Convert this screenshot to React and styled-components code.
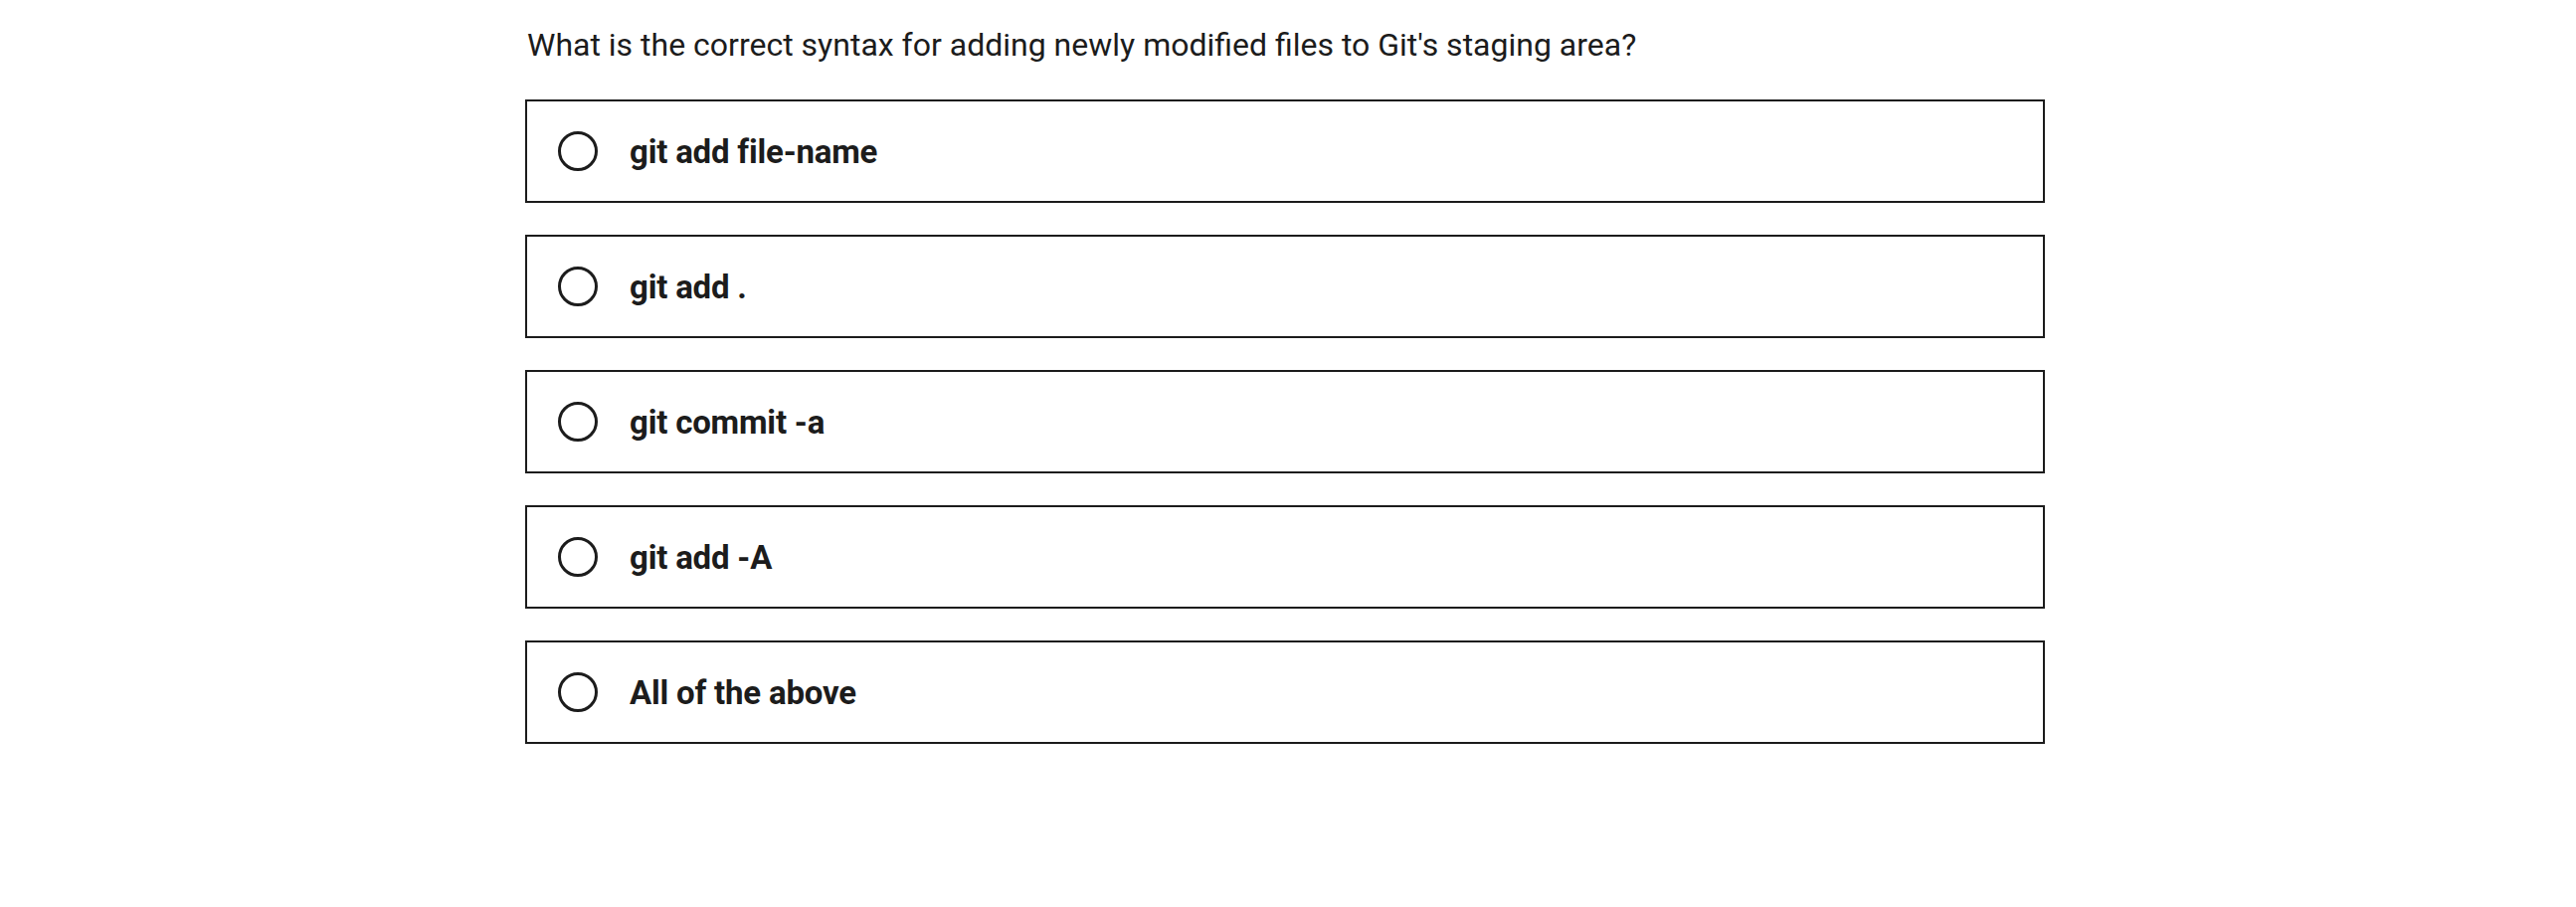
import React from 'react'
import styled, { createGlobalStyle } from 'styled-components'

const GlobalStyle = createGlobalStyle`
  body {
    margin: 0;
    background: #fff;
    font-family: Roboto, "Liberation Sans", sans-serif;
    color: #1c1c1c;
  }
`

const options = ['git add file-name', 'git add .', 'git commit -a', 'git add -A', 'All of the above']

const App = () => {
  return (
    <>
      <GlobalStyle />
      <Quiz>
        <Question>What is the correct syntax for adding newly modified files to Git's staging area?</Question>
        <OptionList>
          {options.map((opt) => (
            <Option key={opt}>
              <Radio />
              <Label>{opt}</Label>
            </Option>
          ))}
        </OptionList>
      </Quiz>
    </>
  )
}

export default App

const Quiz = styled.div`
  width: 1528px;
  margin-left: 528px;
  padding-top: 25px;
`

const Question = styled.p`
  margin: 0 0 35px 2px;
  font-size: 32px;
  line-height: 40px;
  font-weight: 400;
`

const OptionList = styled.div`
  display: flex;
  flex-direction: column;
  gap: 32px;
`

const Option = styled.div`
  display: flex;
  align-items: center;
  height: 100px;
  border: 2px solid #1c1c1c;
  padding-left: 31px;
  cursor: pointer;
`

const Radio = styled.span`
  width: 40px;
  height: 40px;
  box-sizing: border-box;
  border: 3.5px solid #1c1c1c;
  border-radius: 50%;
  flex-shrink: 0;
`

const Label = styled.span`
  margin-left: 32px;
  font-size: 33px;
  font-weight: 700;
  letter-spacing: -0.2px;
`
